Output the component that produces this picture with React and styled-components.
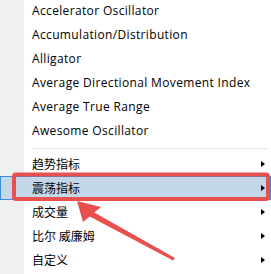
import React from "react";
import styled, { createGlobalStyle } from "styled-components";

const Global = createGlobalStyle`
  html, body { margin: 0; padding: 0; background: #fff; }
  body { font-family: "Open Sans", "Noto Sans CJK SC", sans-serif; }
`;

const Menu = styled.div`
  position: relative;
  width: 271px;
  height: 274px;
  overflow: hidden;
  background: linear-gradient(to right, #f0f0f0 0, #f0f0f0 24px, #fff 24px);
  font-size: 12px;
  color: #000;
`;

const List = styled.div`
  display: flex;
  flex-direction: column;
  margin-top: -1px;
`;

const Item = styled.div`
  box-sizing: border-box;
  height: 24px;
  line-height: 22px;
  padding-right: 5px;
  display: flex;
  align-items: center;
  justify-content: space-between;
  white-space: nowrap;
  border: 1px solid ${(p) => (p.$active ? "#3b8cd6" : "transparent")};
  border-left-width: ${(p) => (p.$active ? "1px" : "0")};
  padding-left: ${(p) => (p.$active ? "31px" : "32px")};
  background: ${(p) => (p.$active ? "#c4d7e8" : "transparent")};
  font-family: ${(p) =>
    p.$cjk ? '"Noto Sans CJK SC", sans-serif' : '"Open Sans", "Noto Sans CJK SC", sans-serif'};
`;

const Label = styled.span`
  letter-spacing: ${(p) => (p.$cjk ? "0" : "0.35px")};
`;

const Chevron = styled.span`
  width: 0;
  height: 0;
  border-left: 4px solid #000;
  border-top: 3.5px solid transparent;
  border-bottom: 3.5px solid transparent;
`;

const Separator = styled.div`
  height: 9px;
  display: flex;
  align-items: center;
  padding-left: 32px;
  padding-right: 3px;
  &::after {
    content: "";
    flex: 1;
    height: 1px;
    background: #e4e4e4;
    margin-top: 1px;
  }
`;

const Overlay = styled.svg`
  position: absolute;
  left: 0;
  top: 0;
  pointer-events: none;
`;

const latin = [
  "Accelerator Oscillator",
  "Accumulation/Distribution",
  "Alligator",
  "Average Directional Movement Index",
  "Average True Range",
  "Awesome Oscillator",
];

const groups = [
  { label: "趋势指标" },
  { label: "震荡指标", active: true },
  { label: "成交量" },
  { label: "比尔 威廉姆" },
  { label: "自定义" },
];

export default function App() {
  return (
    <>
      <Global />
      <Menu>
        <List>
          {latin.map((t) => (
            <Item key={t}>
              <Label>{t}</Label>
            </Item>
          ))}
          <Separator />
          {groups.map((g) => (
            <Item key={g.label} $cjk $active={g.active}>
              <Label $cjk>{g.label}</Label>
              <Chevron />
            </Item>
          ))}
        </List>
        <Overlay width="271" height="274" viewBox="0 0 271 274">
          <rect
            x="14"
            y="174.5"
            width="254"
            height="24.5"
            rx="2"
            fill="none"
            stroke="#e8504e"
            strokeWidth="4"
          />
          <polygon
            points="77,201 101,207 94.3,212.6 175,258 173,260.5 89.7,216.4 83,222"
            fill="#e8504e"
          />
        </Overlay>
      </Menu>
    </>
  );
}
